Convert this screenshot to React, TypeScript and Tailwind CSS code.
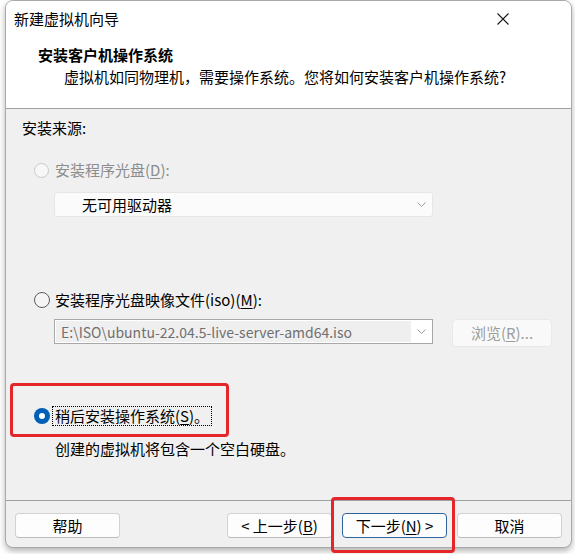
import React from 'react';

const font = "font-['Noto_Sans_CJK_SC','Noto_Sans',sans-serif]";

function Chevron() {
  return (
    <svg width="9" height="5" viewBox="0 0 9 5" className="shrink-0">
      <polyline points="0.5,0.5 4.5,4.5 8.5,0.5" fill="none" stroke="#9a9a9a" strokeWidth="1" />
    </svg>
  );
}

function Radio({ state }: { state: 'disabled' | 'off' | 'on' }) {
  if (state === 'on') {
    return (
      <span className="w-4 h-4 rounded-full bg-[#005fb8] flex items-center justify-center shrink-0">
        <span className="w-[6px] h-[6px] rounded-full bg-white" />
      </span>
    );
  }
  if (state === 'disabled') {
    return <span className="w-[15px] h-[15px] rounded-full border border-[#c9c9c9] bg-[#f7f7f7] shrink-0" />;
  }
  return <span className="w-4 h-4 rounded-full border border-[#5c5c5c] bg-[#f5f5f5] shrink-0" />;
}

function Key({ k }: { k: string }) {
  return <span className="underline underline-offset-2 decoration-1">{k}</span>;
}

function Button({ children, focused }: { children: React.ReactNode; focused?: boolean }) {
  return (
    <button
      className={
        focused
          ? 'w-[105px] h-[25px] rounded-[4px] border border-[#2f63a0] bg-[#fdfdfd] text-[15px] leading-[20px] text-black'
          : 'w-[105px] h-[25px] rounded-[4px] border border-[#d2d2d2] border-b-[#bdbdbd] bg-[#fdfdfd] text-[15px] leading-[20px] text-black'
      }
    >
      {children}
    </button>
  );
}

export default function App() {
  return (
    <div className={`w-[575px] h-[554px] bg-white relative overflow-hidden text-[15px] text-black ${font}`}>
      <div className="ml-[5px] w-[567px] h-[548px] border border-[#a9a9a9] rounded-lg bg-[#f0f0f0] shadow-[0_3px_6px_rgba(0,0,0,0.3)] overflow-hidden flex flex-col">
        {/* header */}
        <div className="h-[108px] bg-white border-b border-[#a0a0a0] flex flex-col shrink-0">
          <div className="h-[35px] flex items-center justify-between pl-[8px]">
            <span className="leading-[20px]">新建虚拟机向导</span>
            <svg width="12" height="12" viewBox="0 0 12 12" className="mr-[62px]">
              <path d="M0.5 0.5 L11.5 11.5 M11.5 0.5 L0.5 11.5" stroke="#1a1a1a" strokeWidth="1.1" />
            </svg>
          </div>
          <div className="mt-[9px] pl-[32px] font-bold leading-[20px]">安装客户机操作系统</div>
          <div className="mt-[2px] pl-[58px] leading-[20px]">
            虚拟机如同物理机，需要操作系统。您将如何安装客户机操作系统?
          </div>
        </div>

        {/* body */}
        <div className="flex-1 flex flex-col pl-[16px] pt-[9px]">
          <div className="leading-[20px]">安装来源:</div>

          <div className="mt-[22px] ml-[12px] flex items-center h-[20px]">
            <Radio state="disabled" />
            <span className="ml-[6px] leading-[20px] text-[#8c8c8c]">
              安装程序光盘(<Key k="D" />):
            </span>
          </div>

          <div className="mt-[12px] ml-[32px] w-[379px] h-[25px] rounded-[3px] border border-[#e6e6e6] bg-[#fbfbfb] flex items-center justify-between pl-[27px] pr-[6px]">
            <span className="leading-[20px]">无可用驱动器</span>
            <Chevron />
          </div>

          <div className="mt-[73px] ml-[12px] flex items-center h-[20px]">
            <Radio state="off" />
            <span className="ml-[5px] leading-[20px]">
              安装程序光盘映像文件(iso)(<Key k="M" />):
            </span>
          </div>

          <div className="mt-[9px] ml-[32px] flex items-start gap-[19px]">
            <div className="w-[379px] h-[25px] border border-[#a8a8a8] bg-white flex items-center pl-[1px] pr-[6px]">
              <div className="w-[355px] h-[21px] bg-[#efefef] flex items-center pl-[5px]">
                <span className="text-[14px] leading-[20px] text-[#707070]">E:\ISO\ubuntu-22.04.5-live-server-amd64.iso</span>
              </div>
              <div className="flex-1 flex justify-end">
                <Chevron />
              </div>
            </div>
            <div className="w-[100px] h-[28px] rounded-[4px] border border-[#e9e9e9] bg-[#f9f9f9] flex items-center justify-center text-[#9d9d9d] leading-[20px]">
              浏览(<Key k="R" />)...
            </div>
          </div>

          <div className="mt-[59px] ml-[12px] flex items-center h-[20px]">
            <Radio state="on" />
            <span className="ml-[2px] h-[20px] border border-dotted border-black px-[2px] flex items-center leading-[18px]">
              稍后安装操作系统(<Key k="S" />)。
            </span>
          </div>

          <div className="mt-[13px] ml-[33px] leading-[20px]">创建的虚拟机将包含一个空白硬盘。</div>
        </div>

        {/* footer */}
        <div className="h-[47px] shrink-0 border-t border-[#a0a0a0] pt-[12px] pl-[9px] pr-[9px] flex items-start">
          <Button>帮助</Button>
          <div className="ml-auto flex gap-[10px]">
            <Button>
              &lt; 上一步(<Key k="B" />)
            </Button>
            <Button focused>
              下一步(<Key k="N" />) &gt;
            </Button>
            <Button>取消</Button>
          </div>
        </div>
      </div>

      {/* annotation boxes */}
      <div className="absolute left-[10px] top-[383px] w-[219px] h-[54px] border-[3px] border-[#e4262b] rounded-[4px]" />
      <div className="absolute left-[331px] top-[497px] w-[124px] h-[56px] border-[3px] border-[#e4262b] rounded-[4px]" />
    </div>
  );
}
